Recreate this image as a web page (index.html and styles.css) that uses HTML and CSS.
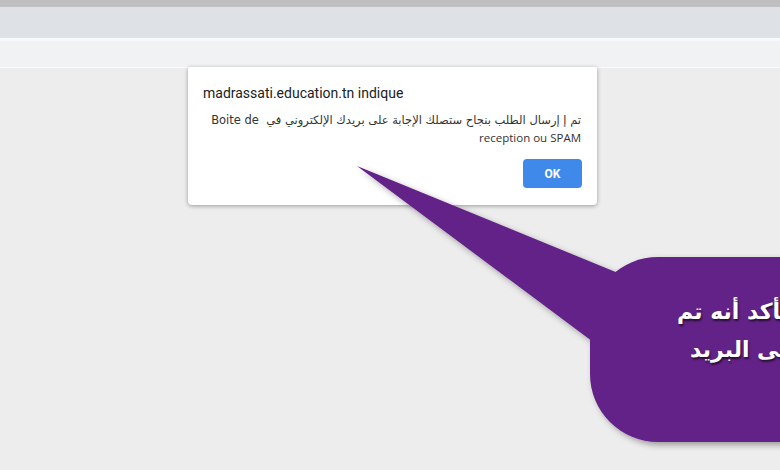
FILE: index.html
```html
<!DOCTYPE html>
<html lang="fr">
<head>
    <meta charset="UTF-8" />
    <title>madrassati.education.tn</title>
    <link rel="stylesheet" href="styles.css">
</head>
<body>

<!-- Barre du navigateur -->
<div class="chrome-top"></div>
<div class="chrome-tabs"></div>
<div class="chrome-toolbar"></div>

<div class="page">

    <!-- Boîte d'alerte -->
    <div class="alert-box">
        <div class="alert-title">madrassati.education.tn indique</div>
        <div class="alert-msg" dir="rtl">
            <div>تم إ إرسال الطلب بنجاح ستصلك الإجابة على بريدك الإلكتروني في&nbsp; Boite de</div>
            <div>reception ou SPAM</div>
        </div>
        <div class="alert-actions">
            <button class="ok-btn">OK</button>
        </div>
    </div>

    <!-- Bulle violette -->
    <svg class="callout" width="780" height="470" viewBox="0 0 780 470">
        <defs>
            <filter id="shadow" x="-10%" y="-10%" width="130%" height="130%">
                <feDropShadow dx="3" dy="3" stdDeviation="3" flood-color="#000" flood-opacity="0.35"/>
            </filter>
        </defs>
        <g filter="url(#shadow)" fill="#632187">
            <rect x="590" y="257" width="300" height="185" rx="68" ry="68"/>
            <polygon points="357,166 662,291 620,362"/>
        </g>
    </svg>
    <div class="callout-text" dir="rtl">
        <div>يرجى التأكد أنه تم</div>
        <div>الإرسال إلى البريد</div>
    </div>

</div>

</body>
</html>
```

FILE: styles.css
```css
html, body {
    margin: 0;
    padding: 0;
    overflow: hidden;
}

body {
    width: 780px;
    height: 470px;
    background: #ededed;
    font-family: Roboto, "Open Sans", "DejaVu Sans", sans-serif;
    color: #202124;
    position: relative;
}

.chrome-top {
    height: 7px;
    background: #c0c0c0;
}

.chrome-tabs {
    height: 31px;
    background: #dee1e6;
}

.chrome-toolbar {
    height: 26px;
    background: #f1f2f4;
    border-top: 3px solid #f8f9fa;
    border-bottom: 1px solid #fafafa;
}

.page {
    position: relative;
}

.alert-box {
    position: absolute;
    top: -1px;
    left: 188px;
    width: 409px;
    height: 138px;
    box-sizing: border-box;
    background: #fff;
    border-radius: 2px 2px 4px 4px;
    box-shadow: 0 1px 4px rgba(0,0,0,0.35);
    padding: 17px 15px 0 15px;
    z-index: 1;
}

.alert-title {
    font-size: 14px;
    line-height: 18px;
}

.alert-msg {
    margin-top: 9px;
    font-family: "DejaVu Sans", "Open Sans", sans-serif;
    font-size: 11.5px;
    line-height: 18px;
    color: #333;
    text-align: right;
    padding-right: 1px;
}

.alert-msg div:last-child {
    font-family: "Open Sans", Roboto, sans-serif;
}

.alert-actions {
    display: flex;
    justify-content: flex-end;
    margin-top: 12px;
}

.ok-btn {
    width: 59px;
    height: 29px;
    border: none;
    border-radius: 4px;
    background: #3f89ea;
    color: #fff;
    font-family: Roboto, sans-serif;
    font-weight: 700;
    font-size: 12px;
    padding: 0;
}

.callout {
    position: absolute;
    top: -68px;
    left: 0;
    z-index: 2;
}

.callout-text {
    position: absolute;
    top: 225px;
    left: 677px;
    width: 300px;
    z-index: 3;
    font-family: "DejaVu Sans", sans-serif;
    font-weight: 700;
    font-size: 22px;
    line-height: 38px;
    color: #fff;
    text-align: left;
    white-space: nowrap;
    text-shadow: 1px 2px 2px rgba(0,0,0,0.6);
}

.callout-text div:last-child {
    padding-left: 13px;
}
```
